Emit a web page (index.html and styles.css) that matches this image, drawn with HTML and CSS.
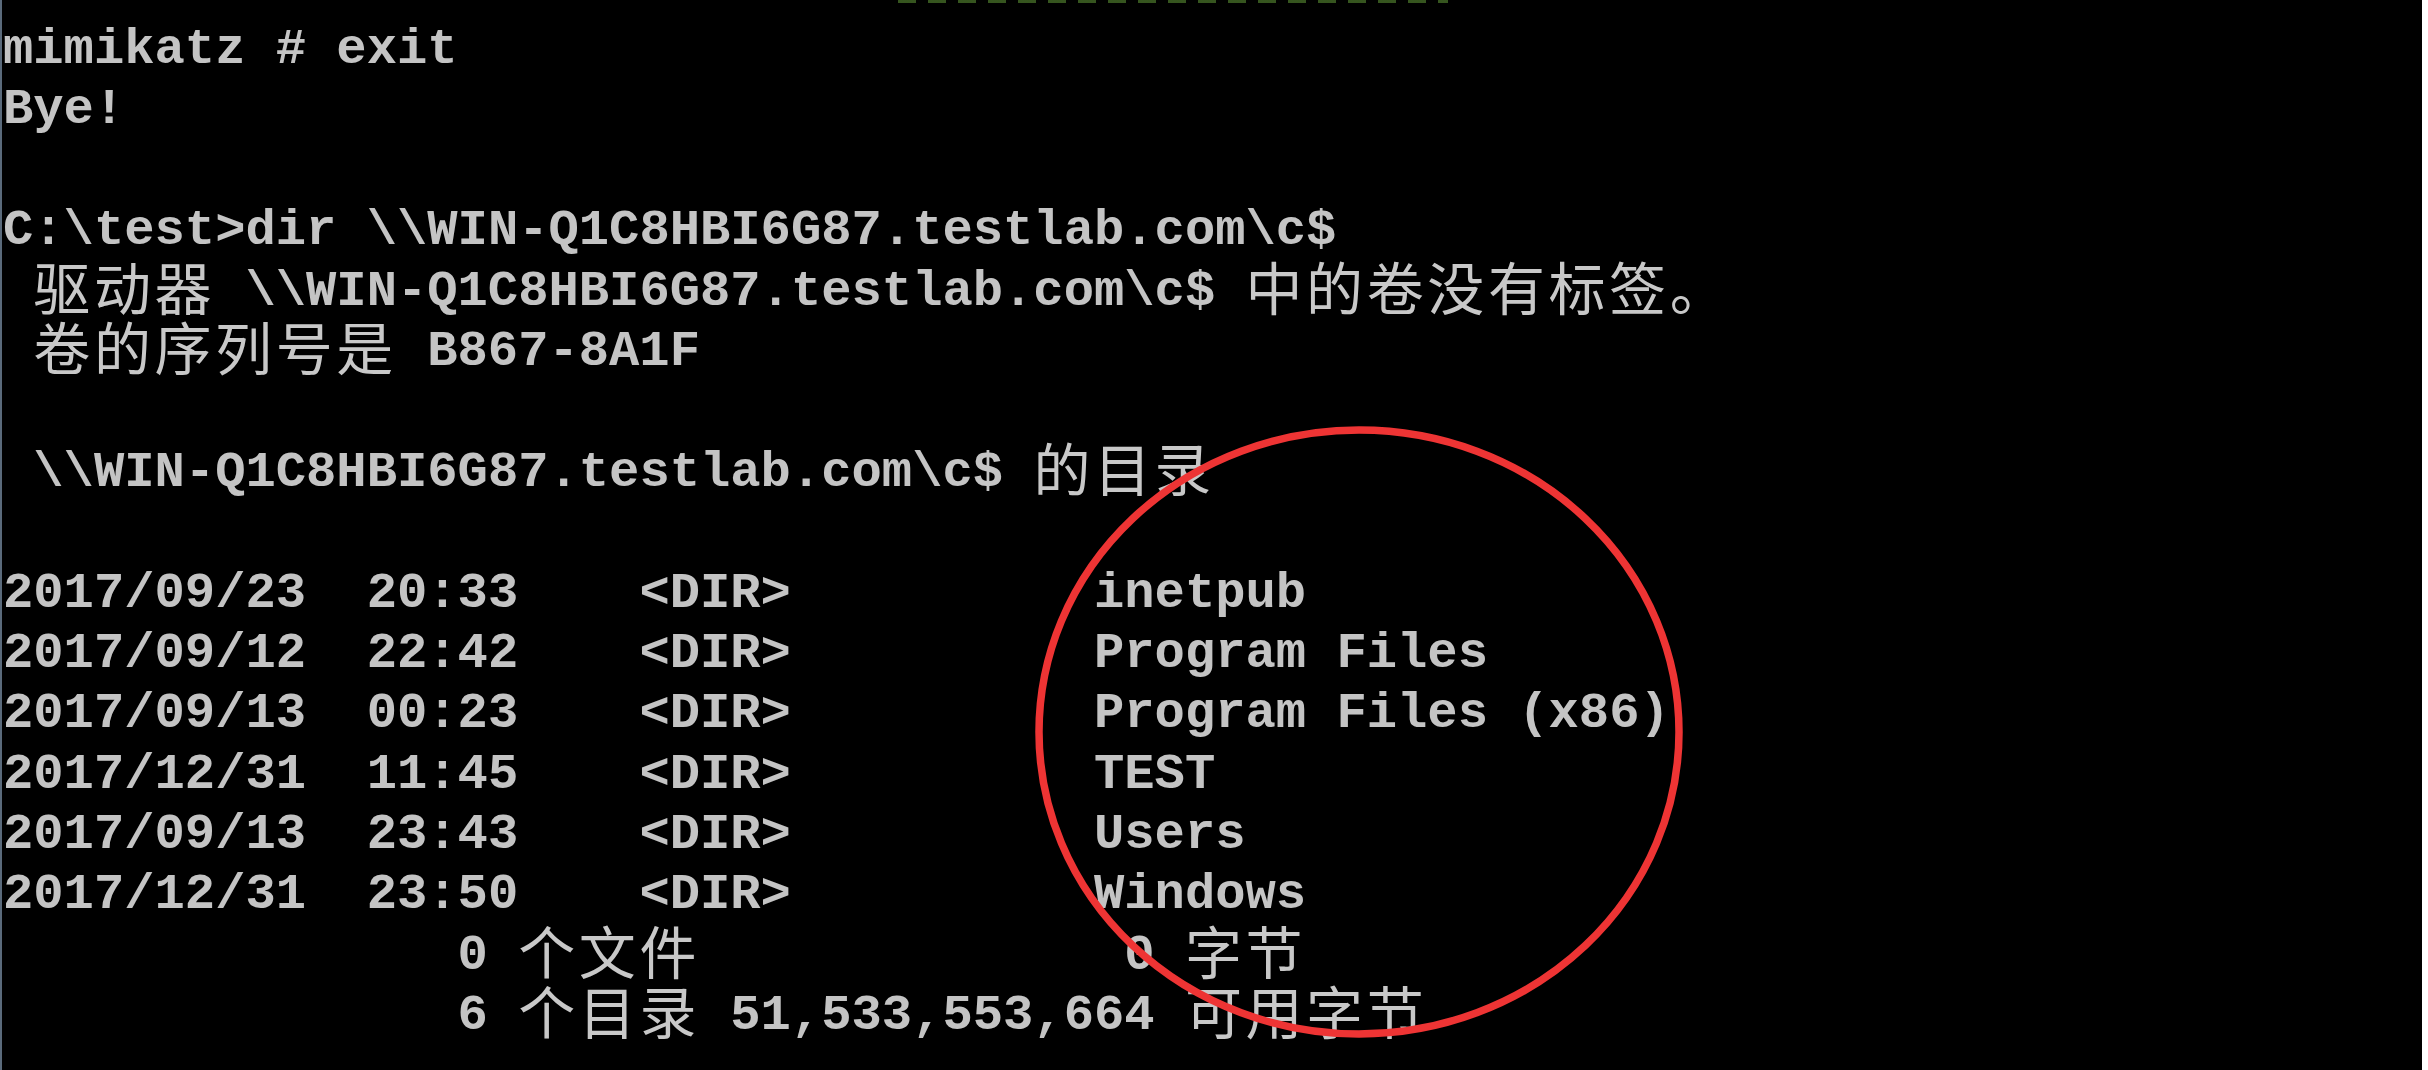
FILE: index.html
```html
<!DOCTYPE html>
<html lang="zh-CN">
<head>
<meta charset="utf-8">
<title>cmd</title>
<link rel="stylesheet" href="styles.css">
</head>
<body>
<div class="term">
  <div class="prev-line"></div>
  <div class="screen">
    <div class="row">mimikatz # exit</div>
    <div class="row">Bye!</div>
    <div class="row"></div>
    <div class="row">C:\test&gt;dir \\WIN-Q1C8HBI6G87.testlab.com\c$</div>
    <div class="row"> <span class="cj">驱动器</span> \\WIN-Q1C8HBI6G87.testlab.com\c$ <span class="cj">中的卷没有标签。</span></div>
    <div class="row"> <span class="cj">卷的序列号是</span> B867-8A1F</div>
    <div class="row"></div>
    <div class="row"> \\WIN-Q1C8HBI6G87.testlab.com\c$ <span class="cj">的目录</span></div>
    <div class="row"></div>
    <div class="row">2017/09/23  20:33    &lt;DIR&gt;          inetpub</div>
    <div class="row">2017/09/12  22:42    &lt;DIR&gt;          Program Files</div>
    <div class="row">2017/09/13  00:23    &lt;DIR&gt;          Program Files (x86)</div>
    <div class="row">2017/12/31  11:45    &lt;DIR&gt;          TEST</div>
    <div class="row">2017/09/13  23:43    &lt;DIR&gt;          Users</div>
    <div class="row">2017/12/31  23:50    &lt;DIR&gt;          Windows</div>
    <div class="row">               0 <span class="cj">个文件</span>              0 <span class="cj">字节</span></div>
    <div class="row">               6 <span class="cj">个目录</span> 51,533,553,664 <span class="cj">可用字节</span></div>
  </div>
  <svg class="mark" width="2420" height="1070" viewBox="0 0 2420 1070" xmlns="http://www.w3.org/2000/svg">
    <ellipse cx="1357" cy="732" rx="320" ry="302" fill="none" stroke="#ee3434" stroke-width="7.5"/>
  </svg>
</div>
</body>
</html>
```
FILE: styles.css
```css
html, body {
  margin: 0;
  padding: 0;
  background: #ffffff;
}

.term {
  position: relative;
  width: 2420px;
  height: 1070px;
  background: #000000;
  border-left: 2px solid #5a6a7b;
  overflow: hidden;
}

.prev-line {
  height: 3px;
  width: 550px;
  margin-left: 896px;
  background: repeating-linear-gradient(90deg, #4d7a2c 0 18px, transparent 18px 30px);
  opacity: 0.7;
}

.screen {
  padding-top: 17px;
  padding-left: 1px;
  font-family: "Liberation Mono", "DejaVu Sans Mono", monospace;
  font-weight: bold;
  font-size: 50.5px;
  color: #c4c4c4;
}

.row {
  height: 60.4px;
  line-height: 60.4px;
  white-space: pre;
}

.cj {
  font-family: "Noto Sans CJK SC", "Noto Sans CJK TC", sans-serif;
  font-weight: normal;
  font-size: 57px;
  letter-spacing: 3.6px;
  line-height: 20px;
  vertical-align: -5px;
  color: #c8c8c8;
}

.mark {
  position: absolute;
  left: 0;
  top: 0;
}
```
